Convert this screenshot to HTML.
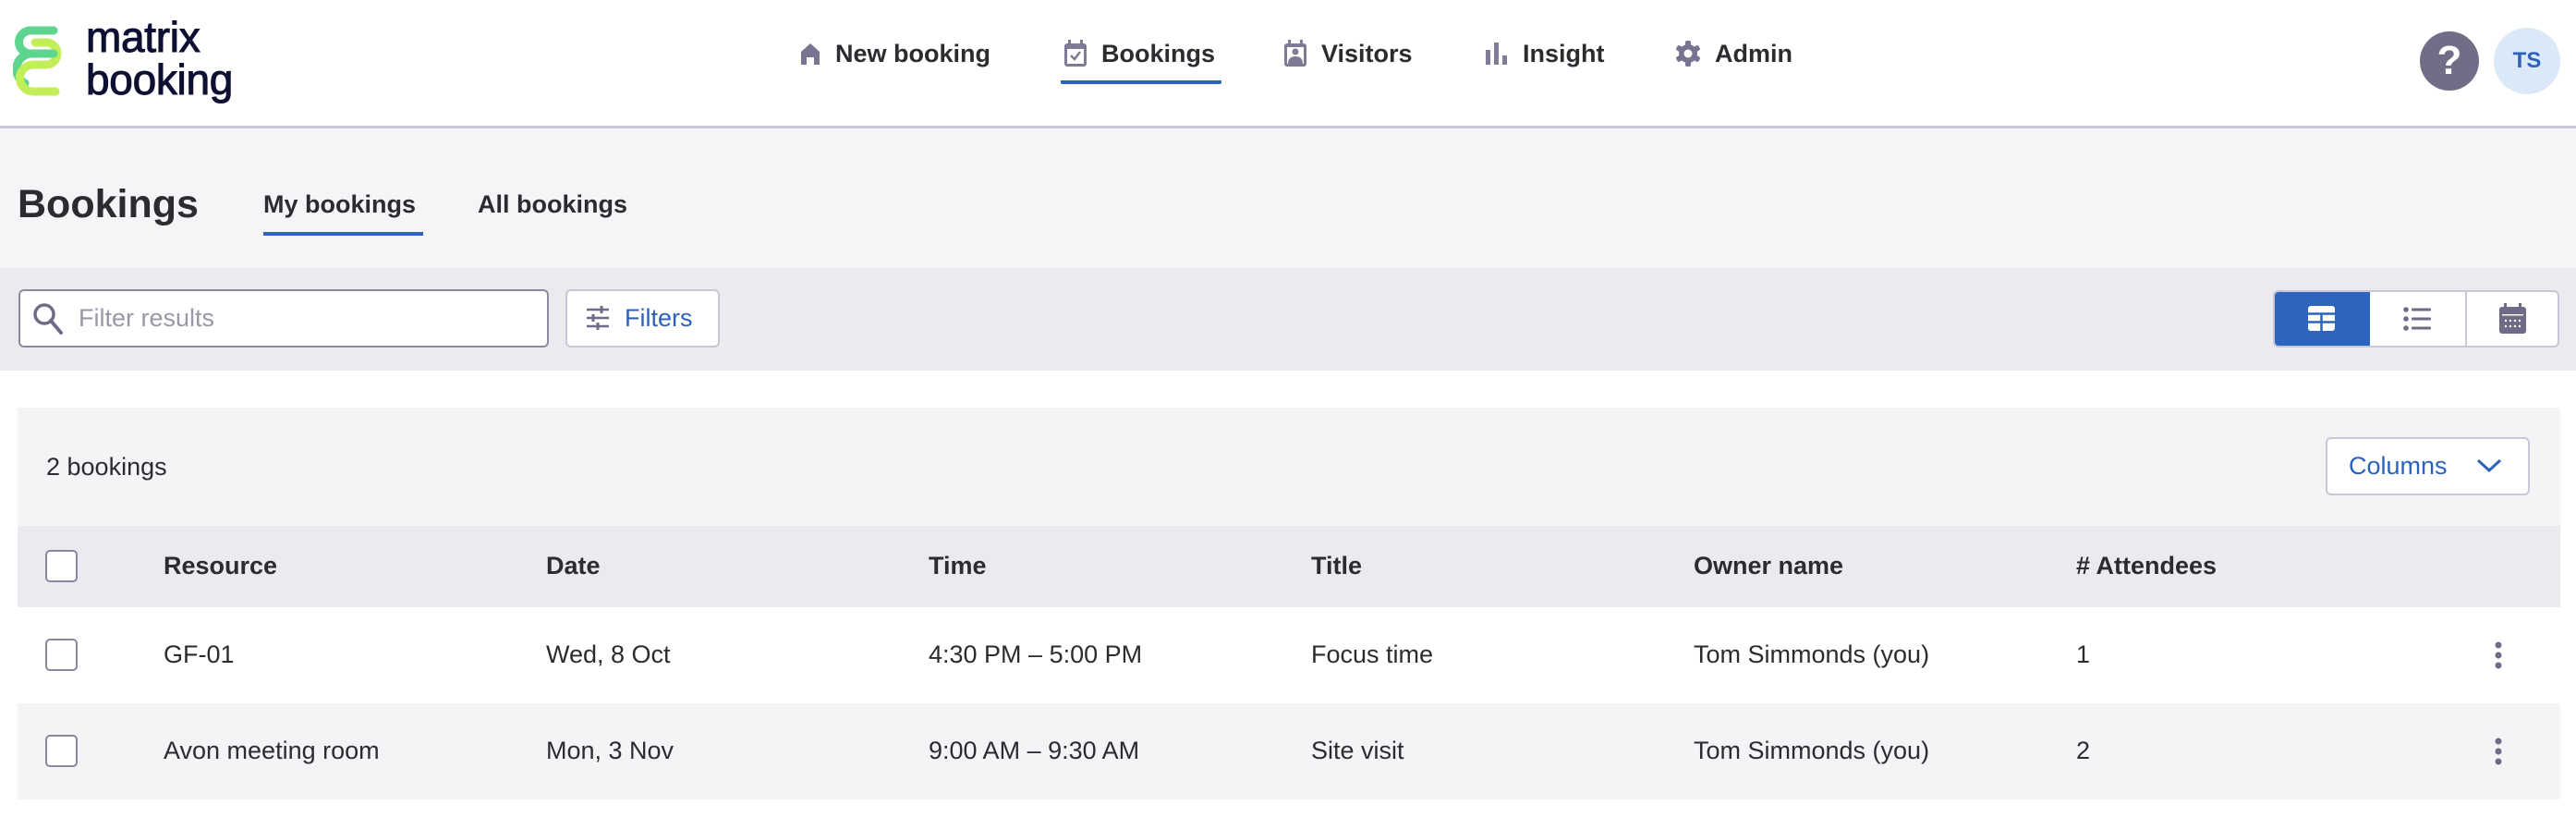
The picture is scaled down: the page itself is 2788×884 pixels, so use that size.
<!DOCTYPE html>
<html><head><meta charset="utf-8"><style>
*{box-sizing:border-box;margin:0;padding:0}
body{width:2788px;height:884px;background:#fff;font-family:"Liberation Sans",Arial,sans-serif;color:#2c2c30;position:relative;overflow:hidden}
.abs{position:absolute}
.hdr{left:0;top:0;width:2788px;height:139px;background:#fff;border-bottom:3px solid #c6c7d7}
.nav{top:40px;height:36px;font-size:27px;font-weight:bold;color:#2c2c30;display:flex;align-items:center;gap:14px;white-space:nowrap}
.sub{left:0;top:140px;width:2788px;height:150px;background:#f5f5f7}
.tool{left:0;top:290px;width:2788px;height:111px;background:#eaeaef}
.card{left:19px;top:441px;width:2752px;height:424px;background:#f4f4f6}
.row{left:19px;width:2752px;position:absolute}
.cb{position:absolute;left:49px;width:35px;height:35px;border:2.5px solid #8a879f;border-radius:5px;background:#fff}
.c{position:absolute;font-size:27px;white-space:nowrap;color:#2c2c30}
.th{font-weight:bold}
</style></head><body>
<div class="abs hdr"></div>
<!-- logo -->
<svg class="abs" style="left:14px;top:22px" width="60" height="86" viewBox="14 22 60 86">
<path d="M58 33 H33 A12.5 12.5 0 0 0 33 58 H58" fill="none" stroke="#5ed58f" stroke-width="9" stroke-linecap="round"/>
<path d="M33 58 A17 17 0 0 0 27 90" fill="none" stroke="#5ed58f" stroke-width="9" stroke-linecap="round"/>
<path d="M38 46 H50 A12 12 0 0 1 50 70 H36 A14.5 14.5 0 0 0 36 99 H60" fill="none" stroke="#c2ee58" stroke-width="9" stroke-linecap="round"/>
<path d="M33 58 H58" fill="none" stroke="#5ed58f" stroke-width="9" stroke-linecap="round"/>
</svg>
<div class="abs" style="left:93px;top:17px;font-size:46px;line-height:46px;color:#0e1033;letter-spacing:-0.3px;-webkit-text-stroke:1px #0e1033">matrix<br>booking</div>
<!-- nav -->
<div class="abs nav" style="left:864px"><svg width="26" height="28" viewBox="0 0 26 28"><path d="M3 26 V12 L13 3 L23 12 V26 H17 V18 H9 V26Z" fill="#787390"/></svg>New booking</div>
<div class="abs nav" style="left:1150px"><svg width="28" height="30" viewBox="0 0 28 30"><rect x="2" y="4" width="24" height="25" rx="3" fill="#7f7a96"/><rect x="6" y="0" width="3" height="6" fill="#7f7a96"/><rect x="19" y="0" width="3" height="6" fill="#7f7a96"/><rect x="5" y="10" width="18" height="16" fill="#fff"/><path d="M9 17 L13 21 L19 13" stroke="#7f7a96" stroke-width="2.5" fill="none"/></svg>Bookings</div>
<div class="abs" style="left:1148px;top:87px;width:174px;height:4px;background:#2d63bc;border-radius:0 0 2px 2px"></div>
<div class="abs nav" style="left:1388px"><svg width="28" height="30" viewBox="0 0 28 30"><rect x="2" y="4" width="24" height="25" rx="3" fill="#7f7a96"/><rect x="6" y="0" width="3" height="6" fill="#7f7a96"/><rect x="19" y="0" width="3" height="6" fill="#7f7a96"/><rect x="5" y="8" width="18" height="18" fill="#fff"/><circle cx="14" cy="13" r="3.5" fill="#7f7a96"/><path d="M6 26 Q6 18 14 18 Q22 18 22 26Z" fill="#7f7a96"/></svg>Visitors</div>
<div class="abs nav" style="left:1606px"><svg width="28" height="28" viewBox="0 0 28 28"><rect x="2" y="10" width="5" height="16" fill="#7f7a96"/><rect x="11" y="2" width="5" height="24" fill="#7f7a96"/><rect x="20" y="16" width="5" height="10" fill="#7f7a96"/></svg>Insight</div>
<div class="abs nav" style="left:1812px"><svg width="30" height="30" viewBox="0 0 30 30"><g fill="#787390"><circle cx="15" cy="15" r="10"/><rect x="12" y="1" width="6" height="28" rx="2"/><rect x="12" y="1" width="6" height="28" rx="2" transform="rotate(60 15 15)"/><rect x="12" y="1" width="6" height="28" rx="2" transform="rotate(120 15 15)"/></g><circle cx="15" cy="15" r="4.5" fill="#fff"/></svg>Admin</div>
<!-- help/avatar -->
<div class="abs" style="left:2619px;top:34px;width:64px;height:64px;border-radius:50%;background:#726d87;color:#fff;font-size:44px;font-weight:bold;text-align:center;line-height:64px">?</div>
<div class="abs" style="left:2699px;top:30px;width:72px;height:72px;border-radius:50%;background:#dbe8f8;color:#2d62bb;font-size:24px;font-weight:bold;text-align:center;line-height:72px">TS</div>
<!-- sub header -->
<div class="abs sub"></div>
<div class="abs" style="left:19px;top:197px;font-size:43px;font-weight:bold;color:#2c2c30">Bookings</div>
<div class="abs" style="left:285px;top:206px;font-size:27px;font-weight:bold;color:#2c2c30">My bookings</div>
<div class="abs" style="left:285px;top:251px;width:173px;height:4px;background:#2d63bc"></div>
<div class="abs" style="left:517px;top:206px;font-size:27px;font-weight:bold;color:#2c2c30">All bookings</div>
<!-- toolbar -->
<div class="abs tool"></div>
<div class="abs" style="left:20px;top:313px;width:574px;height:63px;background:#fff;border:2px solid #8c89a0;border-radius:6px"></div>
<svg class="abs" style="left:34px;top:326px" width="40" height="40" viewBox="0 0 40 40"><circle cx="14" cy="14" r="10" stroke="#6f6a86" stroke-width="3.5" fill="none"/><path d="M21 21 L32 34" stroke="#6f6a86" stroke-width="4" stroke-linecap="round"/></svg>
<div class="abs" style="left:85px;top:329px;font-size:27px;color:#9997a8">Filter results</div>
<div class="abs" style="left:612px;top:313px;width:167px;height:63px;background:#fff;border:2px solid #c6c7d7;border-radius:6px"></div>
<svg class="abs" style="left:634px;top:331px" width="26" height="26" viewBox="0 0 26 26"><g stroke="#6f6a86" stroke-width="2.5"><path d="M1 4 H25 M1 13 H25 M1 22 H25"/></g><g stroke="#6f6a86" stroke-width="3"><path d="M17 0 V8 M8 9 V17 M13 18 V26"/></g></svg>
<div class="abs" style="left:676px;top:329px;font-size:27px;color:#2d62bb">Filters</div>
<div class="abs" style="left:2460px;top:314px;width:310px;height:62px;background:#fff;border:2px solid #c6c7d7;border-radius:6px;overflow:hidden">
<div class="abs" style="left:0;top:0;width:103px;height:62px;background:#2d64bd"></div>
<div class="abs" style="left:206px;top:0;width:2px;height:62px;background:#c6c7d7"></div>
</div>
<svg class="abs" style="left:2498px;top:331px" width="29" height="27" viewBox="0 0 29 27"><rect x="0" y="0" width="29" height="27" rx="3" fill="#fff"/><path d="M0 8.5 H29 M0 17.5 H29 M14.5 9 V27" stroke="#2d64bd" stroke-width="2.5"/></svg>
<svg class="abs" style="left:2601px;top:332px" width="30" height="26" viewBox="0 0 30 26"><g fill="#6f6a86"><circle cx="3" cy="3" r="2.8"/><circle cx="3" cy="13" r="2.8"/><circle cx="3" cy="23" r="2.8"/><rect x="9" y="1.5" width="21" height="3" rx="1"/><rect x="9" y="11.5" width="21" height="3" rx="1"/><rect x="9" y="21.5" width="21" height="3" rx="1"/></g></svg>
<svg class="abs" style="left:2705px;top:328px" width="29" height="33" viewBox="0 0 29 33"><rect x="0" y="4" width="29" height="29" rx="3" fill="#6f6a86"/><rect x="5" y="0" width="3" height="7" fill="#6f6a86"/><rect x="21" y="0" width="3" height="7" fill="#6f6a86"/><g fill="#fff"><rect x="3" y="12" width="23" height="1.5"/><circle cx="7" cy="19" r="1.2"/><circle cx="12" cy="19" r="1.2"/><circle cx="17" cy="19" r="1.2"/><circle cx="22" cy="19" r="1.2"/><circle cx="7" cy="25" r="1.2"/><circle cx="12" cy="25" r="1.2"/><circle cx="17" cy="25" r="1.2"/><circle cx="22" cy="25" r="1.2"/></g></svg>
<!-- card -->
<div class="abs card"></div>
<div class="c" style="left:50px;top:490px">2 bookings</div>
<div class="abs" style="left:2517px;top:473px;width:221px;height:63px;background:#fff;border:2px solid #c6c7d7;border-radius:6px"></div>
<div class="c" style="left:2542px;top:489px;color:#2d62bb">Columns</div>
<svg class="abs" style="left:2680px;top:496px" width="28" height="16" viewBox="0 0 28 16"><path d="M2 2 L14 13 L26 2" stroke="#2d62bb" stroke-width="3" fill="none"/></svg>
<div class="row" style="top:569px;height:88px;background:#eaeaef"></div>
<div class="row" style="top:657px;height:104px;background:#fff"></div>
<div class="row" style="top:761px;height:104px;background:#f4f4f6"></div>
<div class="cb" style="top:595px"></div>
<div class="cb" style="top:691px"></div>
<div class="cb" style="top:795px"></div>
<div class="c th" style="left:177px;top:597px">Resource</div>
<div class="c th" style="left:591px;top:597px">Date</div>
<div class="c th" style="left:1005px;top:597px">Time</div>
<div class="c th" style="left:1419px;top:597px">Title</div>
<div class="c th" style="left:1833px;top:597px">Owner name</div>
<div class="c th" style="left:2247px;top:597px"># Attendees</div>
<div class="c" style="left:177px;top:693px">GF-01</div>
<div class="c" style="left:591px;top:693px">Wed, 8 Oct</div>
<div class="c" style="left:1005px;top:693px">4:30 PM – 5:00 PM</div>
<div class="c" style="left:1419px;top:693px">Focus time</div>
<div class="c" style="left:1833px;top:693px">Tom Simmonds (you)</div>
<div class="c" style="left:2247px;top:693px">1</div>
<div class="c" style="left:177px;top:797px">Avon meeting room</div>
<div class="c" style="left:591px;top:797px">Mon, 3 Nov</div>
<div class="c" style="left:1005px;top:797px">9:00 AM – 9:30 AM</div>
<div class="c" style="left:1419px;top:797px">Site visit</div>
<div class="c" style="left:1833px;top:797px">Tom Simmonds (you)</div>
<div class="c" style="left:2247px;top:797px">2</div>
<svg class="abs" style="left:2699px;top:694px" width="10" height="30" viewBox="0 0 10 30"><g fill="#6f6a86"><circle cx="5" cy="4" r="3.5"/><circle cx="5" cy="15" r="3.5"/><circle cx="5" cy="26" r="3.5"/></g></svg>
<svg class="abs" style="left:2699px;top:798px" width="10" height="30" viewBox="0 0 10 30"><g fill="#6f6a86"><circle cx="5" cy="4" r="3.5"/><circle cx="5" cy="15" r="3.5"/><circle cx="5" cy="26" r="3.5"/></g></svg>
</body></html>
